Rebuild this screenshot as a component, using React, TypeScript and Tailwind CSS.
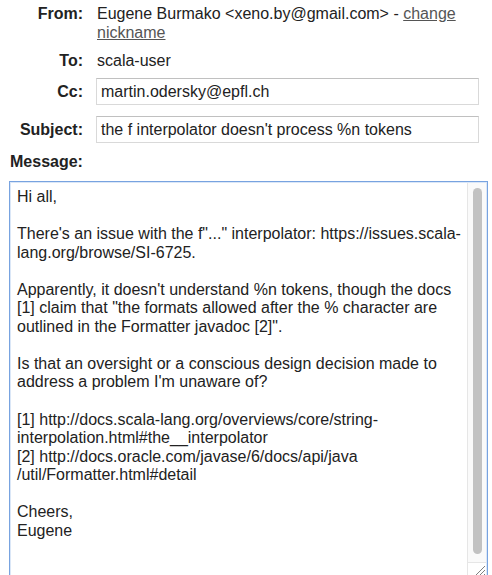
const lines = [
  'Hi all,',
  '',
  'There\'s an issue with the f"..." interpolator: https://issues.scala-',
  'lang.org/browse/SI-6725.',
  '',
  "Apparently, it doesn't understand %n tokens, though the docs",
  '[1] claim that "the formats allowed after the % character are',
  'outlined in the Formatter javadoc [2]".',
  '',
  'Is that an oversight or a conscious design decision made to',
  "address a problem I'm unaware of?",
  '',
  '[1] http://docs.scala-lang.org/overviews/core/string-',
  'interpolation.html#the__interpolator',
  '[2] http://docs.oracle.com/javase/6/docs/api/java',
  '/util/Formatter.html#detail',
  '',
  'Cheers,',
  'Eugene',
];

function Label({ children }: { children: React.ReactNode }) {
  return <div className="w-[83px] shrink-0 text-right font-bold">{children}</div>;
}

function Field({ value }: { value: string }) {
  return (
    <div className="w-[383px] h-[27px] border border-[#d9d9d9] border-t-[#c0c0c0] bg-white pl-[4px] flex items-center whitespace-nowrap">
      {value}
    </div>
  );
}

export default function App() {
  return (
    <div className="w-[492px] h-[575px] overflow-hidden bg-white text-[16px] leading-[19px] text-[#222] font-['Liberation_Sans',Arial,sans-serif]">
      <div className="pt-[4px] flex flex-col">
        <div className="flex gap-[14px]">
          <Label>From:</Label>
          <div className="w-[370px]">
            <div>
              Eugene Burmako &lt;xeno.by@gmail.com&gt; -{' '}
              <a href="#" className="text-[#555] underline">change</a>
            </div>
            <a href="#" className="text-[#555] underline">nickname</a>
          </div>
        </div>
        <div className="flex gap-[14px] mt-[9px]">
          <Label>To:</Label>
          <div>scala-user</div>
        </div>
        <div className="flex gap-[13px] items-center mt-[8px]">
          <Label>Cc:</Label>
          <Field value="martin.odersky@epfl.ch" />
        </div>
        <div className="flex gap-[13px] items-center mt-[11px]">
          <Label>Subject:</Label>
          <Field value="the f interpolator doesn't process %n tokens" />
        </div>
        <div className="mt-[9px] pl-[10px] font-bold">Message:</div>
        <div className="mt-[10px] ml-[9px] w-[479px] h-[396px] border border-[#78a3e0] shadow-[inset_0_0_0_1px_#dbe7f7] flex">
          <div className="flex-1 pl-[7px] pt-[6px] leading-[18.55px] whitespace-pre">
            {lines.map((l, i) => (
              <div key={i} className="h-[18.55px]">{l}</div>
            ))}
          </div>
          <div className="w-[19px] flex flex-col border-l border-[#e6e6e6] bg-[#fafafa] mr-[1px] mt-[1px]">
            <div className="flex-1 pt-[5px] pb-[8px] flex justify-center">
              <div className="w-[9px] h-[366px] rounded-full bg-[#c2c2c2]" />
            </div>
            <div className="h-[16px] border-t border-[#e6e6e6] bg-white flex items-start justify-end">
              <svg width="13" height="13" viewBox="0 0 13 13" className="mt-[1px]">
                <path d="M12 2 L2 12 M12 6 L6 12 M12 10 L10 12" stroke="#808080" strokeWidth="1" />
              </svg>
            </div>
          </div>
        </div>
      </div>
    </div>
  );
}
